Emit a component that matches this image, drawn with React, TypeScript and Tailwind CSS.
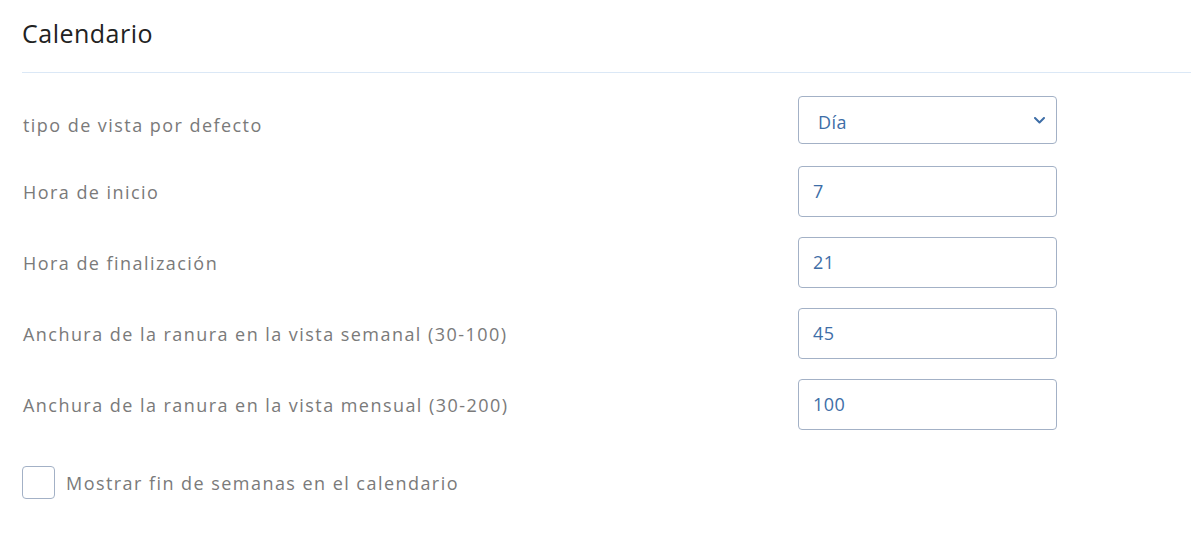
import React from "react";

const rows: { label: string; value: string; select?: boolean }[] = [
  { label: "tipo de vista por defecto", value: "Día", select: true },
  { label: "Hora de inicio", value: "7" },
  { label: "Hora de finalización", value: "21" },
  { label: "Anchura de la ranura en la vista semanal (30-100)", value: "45" },
  { label: "Anchura de la ranura en la vista mensual (30-200)", value: "100" },
];

export default function App() {
  return (
    <div
      className="w-[1191px] h-[536px] bg-white overflow-hidden"
      style={{ fontFamily: "'Open Sans', 'Liberation Sans', sans-serif" }}
    >
      <div className="pl-[22px]">
        <h1 className="pt-[15px] h-[72px] text-[25px] leading-[36px] tracking-[0.5px] text-[#222] font-normal">Calendario</h1>
        <div className="h-px bg-[#dbe8f6]" />
        <div className="flex flex-col pt-[23px]">
          {rows.map((r, i) => (
            <div key={r.label} className={`flex items-center ${i === 0 ? "mb-[22px]" : "mb-[20px]"}`}>
              <div
                className={`w-[776px] text-[18px] tracking-[1.45px] text-[#7a7a7a] pl-px ${
                  r.select ? "pt-[10px]" : "pt-[2px]"
                }`}
              >
                {r.label}
              </div>
              {r.select ? (
                <div className="w-[259px] h-[48px] border border-[#a3b1c6] rounded-[4px] flex items-center justify-between pl-[19px] pr-[11px] text-[18px] tracking-[0.5px] text-[#3e6ea7]">
                  <span className="pt-[4px]">{r.value}</span>
                  <svg width="11" height="7" viewBox="0 0 11 7" fill="none">
                    <path d="M1 1l4.5 4.5L10 1" stroke="#3e6ea7" strokeWidth="2" strokeLinecap="round" strokeLinejoin="round" />
                  </svg>
                </div>
              ) : (
                <div className="w-[259px] h-[51px] border border-[#a3b1c6] rounded-[4px] flex items-center pl-[14px] text-[18px] tracking-[0.5px] text-[#3e6ea7]">
                  {r.value}
                </div>
              )}
            </div>
          ))}
        </div>
        <div className="flex items-center gap-[11px] mt-[16px]">
          <div className="w-[33px] h-[33px] border border-[#a3b1c6] rounded-[4px] bg-white" />
          <span className="text-[18px] tracking-[1.45px] text-[#7a7a7a] pt-[2px]">Mostrar fin de semanas en el calendario</span>
        </div>
      </div>
    </div>
  );
}
